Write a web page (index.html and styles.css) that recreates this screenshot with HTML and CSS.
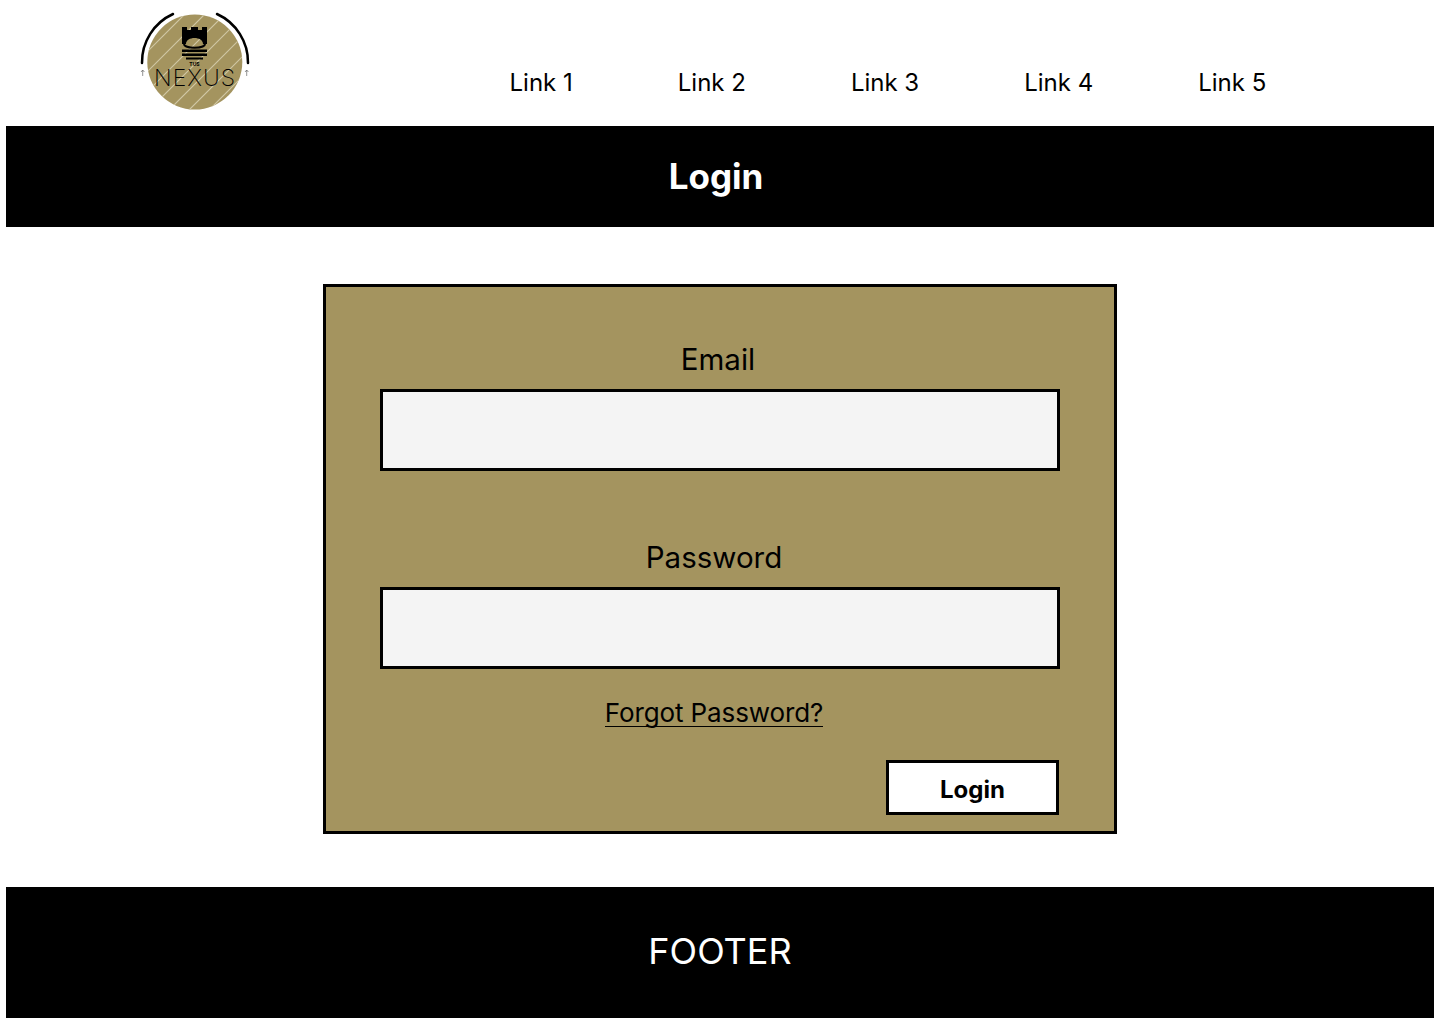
FILE: index.html
```html
<!DOCTYPE html>
<html lang="en">
<head>
    <meta charset="UTF-8">
    <meta name="viewport" content="width=device-width, initial-scale=1.0">
    <title>Login</title>
    <link rel="stylesheet" href="styles.css">
</head>
<body>
    <header class="site-header">
        <a class="logo" href="#">
            <svg width="110" height="100" viewBox="0 0 110 100">
                <defs>
                    <clipPath id="disc"><circle cx="54.800" cy="51" r="47.500"></circle></clipPath>
                </defs>
                <circle cx="54.800" cy="51" r="47.500" fill="#a4945f"></circle>
                <g clip-path="url(#disc)" stroke="#cfc6a4" stroke-width="1.200">
                    <path d="M0 48L48 0M0 68L68 0M0 88L88 0M0 108L108 0M10 118L118 10M30 118L118 30M50 118L118 50M70 118L118 70"></path>
                </g>
                <path d="M2 52A53 53 0 0 1 33 3M108 52A53 53 0 0 0 77 3" fill="none" stroke="#000" stroke-width="2.500" stroke-linecap="round"></path>
                <path d="M2.700 59V65M1 61L2.700 59L4.400 61M106.700 59V65M105 61L106.700 59L108.400 61" fill="none" stroke="#666" stroke-width="0.700"></path>
                <path d="M42 16H47V19H51V16H58V19H62V16H67V33H63C63 25 46 25 46 33H42Z" fill="#000"></path>
                <path d="M44 33C44 38 65 38 65 33" fill="none" stroke="#000" stroke-width="2"></path>
                <path d="M42 38.500H67V41H42ZM42 42.500H67V45H42ZM46 46.500H63V48.500H46Z" fill="#000"></path>
                <text x="54.500" y="55" class="logo-small">TUS</text>
                <text x="55" y="75" class="logo-name">NEXUS</text>
            </svg>
        </a>
        <nav class="nav-links">
            <a href="#">Link 1</a>
            <a href="#">Link 2</a>
            <a href="#">Link 3</a>
            <a href="#">Link 4</a>
            <a href="#">Link 5</a>
        </nav>
    </header>

    <div class="banner">Login</div>

    <main class="content">
        <form class="login-form">
            <label for="email">Email</label>
            <input type="text" id="email" name="email">

            <label class="second" for="password">Password</label>
            <input type="password" id="password" name="password">

            <a class="forgot" href="#">Forgot Password?</a>

            <div class="actions">
                <button type="submit">Login</button>
            </div>
        </form>
    </main>

    <footer class="site-footer">FOOTER</footer>
</body>
</html>
```

FILE: styles.css
```css
body {
    font-family: Inter, "Liberation Sans", sans-serif;
    background-color: #fff;
    color: #000;
    margin: 0;
    padding: 0 6px;
}

.site-header {
    height: 126px;
    display: flex;
    align-items: flex-start;
}

.logo {
    display: block;
    margin: 11px 0 0 134px;
    width: 110px;
}

.logo svg {
    display: block;
}

.logo-small {
    font-size: 5px;
    font-weight: 700;
    text-anchor: middle;
}

.logo-name {
    font-size: 23px;
    font-weight: 200;
    letter-spacing: 1px;
    text-anchor: middle;
}

.nav-links {
    display: flex;
    gap: 105px;
    margin: 68px 0 0 259.500px;
}

.nav-links a {
    color: #000;
    font-size: 24px;
    line-height: 30px;
    text-decoration: none;
}

.banner {
    background-color: #000;
    color: #fff;
    height: 101px;
    line-height: 101px;
    text-align: center;
    font-size: 35px;
    font-weight: 700;
    padding-right: 8px;
    box-sizing: border-box;
}

.content {
    display: flex;
    justify-content: center;
    padding: 57px 0 53px;
}

.login-form {
    box-sizing: border-box;
    width: 794px;
    height: 550px;
    background-color: #a4945f;
    border: 3px solid #000;
    padding: 53px 54px 0;
    display: flex;
    flex-direction: column;
}

label {
    display: block;
    font-size: 29.500px;
    line-height: 38px;
    text-align: center;
    padding-right: 4px;
    margin-bottom: 11px;
}

label.second {
    padding-right: 12px;
    margin-top: 67px;
}

input[type="text"],
input[type="password"] {
    box-sizing: border-box;
    width: 680px;
    height: 82px;
    background-color: #f4f4f4;
    border: 3px solid #000;
    border-radius: 0;
    flex: none;
}

.forgot {
    align-self: center;
    color: #000;
    font-size: 26px;
    line-height: 26px;
    letter-spacing: -0.100px;
    margin-top: 31px;
    margin-right: 12px;
    text-decoration: none;
    border-bottom: 1px solid #000;
}

.actions {
    display: flex;
    justify-content: flex-end;
    margin-top: 33px;
}

button {
    box-sizing: border-box;
    width: 173px;
    height: 55px;
    margin-right: 1px;
    padding-top: 4px;
    background-color: #fff;
    border: 3px solid #000;
    border-radius: 0;
    font-family: inherit;
    font-size: 24px;
    font-weight: 700;
    color: #000;
}

.site-footer {
    background-color: #000;
    color: #fff;
    height: 131px;
    line-height: 129px;
    text-align: center;
    font-size: 36px;
}
```
